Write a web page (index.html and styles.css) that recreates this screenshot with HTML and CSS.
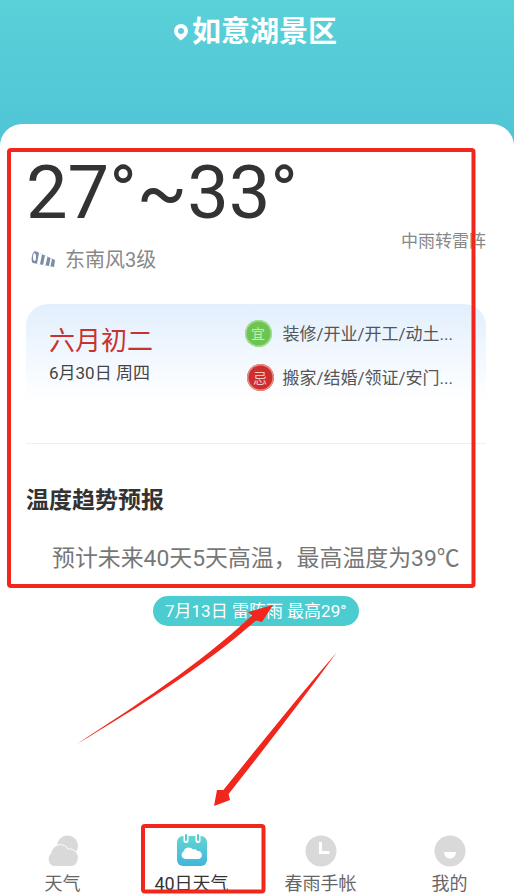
FILE: index.html
```html
<!DOCTYPE html>
<html lang="zh-CN">
<head>
<meta charset="utf-8">
<title>40日天气</title>
<link rel="stylesheet" href="styles.css">
</head>
<body>
<div class="page">
  <header class="top">
    <svg class="pin" width="16" height="18" viewBox="0 0 16 18"><path fill-rule="evenodd" fill="#fff" d="M8 1a7 7 0 0 1 7 7c0 3.600-3.600 7-7 9.500C4.600 15 1 11.600 1 8a7 7 0 0 1 7-7zm0 4a3 3 0 1 0 0 6 3 3 0 0 0 0-6z"/></svg>
    <h1 class="place">如意湖景区</h1>
  </header>
  <main class="card">
    <section class="hero">
      <div>
        <div class="temp">27°~33°</div>
        <div class="wind">
          <svg class="sock" width="26" height="20" viewBox="0 0 26 20">
            <path fill="#7c8ba6" d="M5 1 25 10 24 17 3 13C.5 11.500 1.500 2.500 5 1z"/>
            <ellipse cx="4.500" cy="7" rx="1.500" ry="4" fill="#fff"/>
            <path fill="#fff" d="M9 2.800 12 4.150 10 14.300 7 13.760zM15 5.500 17.500 6.600 15.500 15.400 13 14.900zM20.500 8 22 8.650 20.500 16.300 19 16z"/>
          </svg>
          <span>东南风3级</span>
        </div>
      </div>
      <div class="cond">中雨转雷阵</div>
    </section>
    <section class="almanac">
      <div class="lunar">
        <div class="lunar-name">六月初二</div>
        <div class="lunar-date">6月30日 周四</div>
      </div>
      <div class="deeds">
        <div class="deed"><span class="seal seal-good">宜</span><span class="deed-text">装修/开业/开工/动土...</span></div>
        <div class="deed"><span class="seal seal-bad">忌</span><span class="deed-text">搬家/结婚/领证/安门...</span></div>
      </div>
    </section>
    <hr class="rule">
    <h2 class="trend-title">温度趋势预报</h2>
    <p class="trend-text">预计未来40天5天高温，最高温度为39℃</p>
    <div class="pill-row"><span class="pill">7月13日 雷阵雨 最高29°</span></div>
  </main>
  <nav class="tabs">
    <div class="tab">
      <svg width="32" height="32" viewBox="0 0 32 32"><circle cx="20.500" cy="11" r="10.500" fill="#d9d9d9"/><path fill="#d9d9d9" stroke="#fff" stroke-width="1" d="M8 31.500C1 31.500-1 22 4 18 5 10 16 6 21 14c7-1 12 6 10 11-1 4-4 6.500-7 6.500z"/></svg>
      <span>天气</span>
    </div>
    <div class="tab">
      <svg class="cal-icon" width="32" height="33" viewBox="0 0 32 33"><defs><linearGradient id="cal" x1="0" y1="0" x2="0" y2="1"><stop offset="0" stop-color="#63d6cf"/><stop offset="1" stop-color="#41b5de"/></linearGradient></defs><rect x="1" y="3" width="30" height="30" rx="6" fill="url(#cal)"/><rect x="7.500" y="0" width="5" height="10" rx="2.500" fill="#fff"/><rect x="9" y="1" width="2" height="7" rx="1" fill="#53cbd2"/><rect x="19.500" y="0" width="5" height="10" rx="2.500" fill="#fff"/><rect x="21" y="1" width="2" height="7" rx="1" fill="#53cbd2"/><path fill="#fff" d="M10 26c-4.500 0-6-5.500-2.500-7.500C8.500 14 14.500 13 17 16.500c1-.5 3.500-.5 4.500 1.500 5.500-.5 6 8 .5 8z"/></svg>
      <span class="tab-on">40日天气</span>
    </div>
    <div class="tab">
      <svg width="32" height="32" viewBox="0 0 32 32"><circle cx="16" cy="16" r="15.500" fill="#d9d9d9"/><path fill="#fff" d="M14 7h3v9h7.500v3H14z"/></svg>
      <span>春雨手帐</span>
    </div>
    <div class="tab">
      <svg width="32" height="32" viewBox="0 0 32 32"><circle cx="16" cy="16" r="15.500" fill="#d9d9d9"/><path fill="#fff" d="M10 17h12c0 4-2.500 6.500-6 6.500S10 21 10 17z"/></svg>
      <span>我的</span>
    </div>
  </nav>
  <svg class="marks" width="514" height="895" viewBox="0 0 514 895">
    <rect x="9" y="150" width="464.500" height="436" rx="2" fill="none" stroke="#f1261c" stroke-width="4"/>
    <rect x="143" y="826" width="120.500" height="65.500" rx="2" fill="none" stroke="#f1261c" stroke-width="4"/>
    <path fill="#f1261c" d="M77 744C135 706 198 666 252 615.600L248 612 273 605 262 622 256 620.400C202 668 138 707 77 744z"/>
    <path fill="#f1261c" d="M337 652C300 695 262 742 223.400 790L217 790 214 806 230 800 228.600 794C265 748 302 700 337 652z"/>
  </svg>
</div>
</body>
</html>
```
FILE: styles.css
```css
* { box-sizing: border-box; }
html, body { margin: 0; padding: 0; }
body {
  background: #fff;
  font-family: Roboto, "Noto Sans CJK SC", sans-serif;
}
.page {
  position: relative;
  width: 514px;
  height: 895px;
  overflow: hidden;
  display: flex;
  flex-direction: column;
  background: linear-gradient(180deg, #5ad0d8 0, #4fc4d6 150px, #fff 150px);
}
.top {
  height: 124px;
  flex: none;
  display: flex;
  justify-content: center;
  align-items: flex-start;
  gap: 3px;
  padding: 13px 4px 0 0;
  color: #fff;
}
.pin { margin-top: 10px; }
.place {
  margin: 0;
  font-size: 29px;
  line-height: 38px;
  font-weight: 700;
}
.card {
  flex: 1;
  background: #fff;
  border-radius: 22px 22px 0 0;
  padding: 25px 28px 0 26px;
}
.hero {
  display: flex;
  justify-content: space-between;
  align-items: flex-start;
}
.temp {
  font-size: 74px;
  line-height: 88px;
  color: #333;
}
.wind {
  display: flex;
  align-items: center;
  gap: 9px;
  margin: 11px 0 0 4px;
  font-size: 20px;
  line-height: 24px;
  color: #888;
}
.cond {
  margin-top: 80px;
  font-size: 17px;
  line-height: 24px;
  color: #888;
}
.almanac {
  margin-top: 32px;
  height: 96px;
  display: flex;
  justify-content: space-between;
  padding: 17px 33px 0 23px;
  border-radius: 22px 22px 0 0;
  background: linear-gradient(180deg, #e2effd 0, #fff 100%);
}
.lunar-name {
  font-size: 26px;
  line-height: 40px;
  color: #c8322f;
}
.lunar-date {
  font-size: 17px;
  line-height: 24px;
  color: #444;
}
.deeds {
  display: flex;
  flex-direction: column;
  gap: 15px;
  margin-top: -2px;
}
.deed {
  display: flex;
  align-items: center;
  justify-content: flex-end;
  gap: 9px;
  height: 29px;
}
.deed-text {
  font-size: 17px;
  line-height: 24px;
  color: #555;
}
.seal {
  width: 27px;
  height: 27px;
  border-radius: 50%;
  display: flex;
  align-items: center;
  justify-content: center;
  font-size: 14px;
  line-height: 1;
}
.seal-good { background: #6cc553; color: #c3eeb0; box-shadow: inset 0 0 0 1.500px #a6dd94; margin-right: 2px; }
.seal-bad { background: #cf2f2c; color: #f5c6c2; box-shadow: inset 0 0 0 1.500px #e68f8b; }
.rule {
  margin: 43px 0 0;
  border: 0;
  border-top: 1px solid #efefef;
}
.trend-title {
  margin: 41px 0 0;
  font-size: 23px;
  line-height: 32px;
  font-weight: 700;
  color: #333;
}
.trend-text {
  margin: 26px 0 0 26px;
  font-size: 22.900px;
  line-height: 32px;
  color: #777;
  white-space: nowrap;
}
.pill-row { margin: 21px 0 0 127px; }
.pill {
  display: inline-block;
  height: 30px;
  padding: 0 12px;
  border-radius: 15px;
  background: #4accd0;
  color: #fff;
  font-size: 17px;
  line-height: 30px;
}
.tabs {
  flex: none;
  height: 65px;
  margin-left: -2px;
  padding-top: 5px;
  display: grid;
  grid-template-columns: repeat(4, 129px);
}
.tab {
  display: flex;
  flex-direction: column;
  align-items: center;
  font-size: 18px;
  line-height: 24px;
  color: #666;
  gap: 5px;
}
.cal-icon { margin: -2px 0 1px; }
.tab-on { color: #333; }
.marks {
  position: absolute;
  left: 0;
  top: 0;
  pointer-events: none;
}
```
